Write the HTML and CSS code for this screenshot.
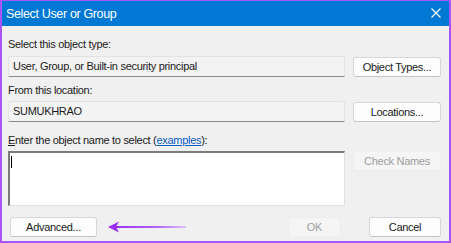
FILE: index.html
```html
<!DOCTYPE html>
<html>
<head>
<meta charset="utf-8">
<link rel="stylesheet" href="styles.css">
</head>
<body>
<div class="window">
  <div class="titlebar">
    <span class="title">Select User or Group</span>
    <svg class="close" width="10" height="10" viewBox="0 0 10 10"><path d="M0.5 0.5 L9.5 9.5 M9.5 0.5 L0.5 9.5" stroke="#fff" stroke-width="1.1" fill="none"/></svg>
  </div>
  <div class="content">
    <div class="label l1">Select this object type:</div>
    <div class="row">
      <div class="field">User, Group, or Built-in security principal</div>
      <button class="btn">Object Types...</button>
    </div>
    <div class="label l2">From this location:</div>
    <div class="row">
      <div class="field">SUMUKHRAO</div>
      <button class="btn">Locations...</button>
    </div>
    <div class="label l3"><u>E</u>nter the object name to select (<a class="link">examples</a>):</div>
    <div class="row top">
      <div class="textarea"><span class="caret"></span></div>
      <button class="btn disabled">Check Names</button>
    </div>
    <div class="bottom">
      <div class="left">
        <button class="btn adv">Advanced...</button>
        <svg class="arrow" width="80" height="12" viewBox="0 0 80 12">
          <defs>
            <linearGradient id="g" x1="0" x2="1" y1="0" y2="0">
              <stop offset="0" stop-color="#9a2ff0"/>
              <stop offset="0.6" stop-color="#b065f5"/>
              <stop offset="1" stop-color="#dcc0fb"/>
            </linearGradient>
          </defs>
          <rect x="6" y="5" width="72" height="2" fill="url(#g)"/>
          <path d="M0 6 L11 0.5 L8 6 L11 11.5 Z" fill="#9a2ff0"/>
        </svg>
      </div>
      <div class="right">
        <button class="btn ok disabled">OK</button>
        <button class="btn cancel">Cancel</button>
      </div>
    </div>
  </div>
</div>
</body>
</html>
```
FILE: styles.css
```css
html, body {
  margin: 0;
  padding: 0;
}
body {
  width: 451px;
  height: 243px;
  overflow: hidden;
  font-family: "Liberation Sans", Arial, sans-serif;
  font-size: 11px;
  letter-spacing: -0.3px;
  color: #1a1a1a;
}
.window {
  box-sizing: border-box;
  width: 451px;
  height: 243px;
  border: 2px solid #a855f7;
  border-top-width: 1px;
  background: #f0f0f0;
  display: flex;
  flex-direction: column;
}
.titlebar {
  height: 25px;
  background: #0078d4;
  color: #fff;
  display: flex;
  align-items: center;
  justify-content: space-between;
  padding: 0 8px 0 4px;
  font-size: 12.5px;
  letter-spacing: -0.35px;
}
.close {
  display: block;
  margin-top: -2px;
}
.content {
  padding: 0 8px 0 6px;
  display: flex;
  flex-direction: column;
}
.label {
  height: 14px;
  line-height: 14px;
}
.l1 { margin-top: 11px; margin-bottom: 5px; }
.l2 { margin-top: 6px; margin-bottom: 4px; }
.l3 { margin-top: 11px; margin-bottom: 4px; }
.link {
  color: #0a5ec2;
  text-decoration: underline;
}
.row {
  display: flex;
  align-items: center;
  justify-content: space-between;
}
.row.top { align-items: flex-start; }
.field {
  box-sizing: border-box;
  width: 337px;
  height: 21px;
  line-height: 19px;
  padding-left: 4px;
  background: #f3f3f3;
  border: 1px solid #e2e2e2;
  border-bottom: 1px solid #8a8a8a;
  border-radius: 2px 2px 0 0;
}
.btn {
  box-sizing: border-box;
  width: 88px;
  height: 20px;
  padding: 0;
  font-family: inherit;
  font-size: 11px;
  letter-spacing: -0.3px;
  color: #1a1a1a;
  background: #fdfdfd;
  border: 1px solid #d6d6d6;
  border-bottom-color: #c4c4c4;
  border-radius: 3px;
}
.btn.disabled {
  color: #9d9d9d;
  background: #f5f5f5;
  border-color: #ededed;
}
.textarea {
  box-sizing: border-box;
  width: 337px;
  height: 55px;
  background: #fff;
  border: 1px solid #e0e0e0;
  border-top: 2px solid #7a7a7a;
  border-left: 2px solid #7a7a7a;
  padding: 3px 0 0 1px;
}
.caret {
  display: block;
  width: 1px;
  height: 12px;
  background: #000;
}
.bottom {
  margin-top: 11px;
  display: flex;
  justify-content: space-between;
  align-items: center;
  padding-left: 2px;
}
.left, .right {
  display: flex;
  align-items: center;
}
.adv { width: 87px; }
.arrow {
  display: block;
  margin-left: 11px;
}
.ok { width: 53px; margin-right: 28px; }
.cancel { width: 72px; }
```
